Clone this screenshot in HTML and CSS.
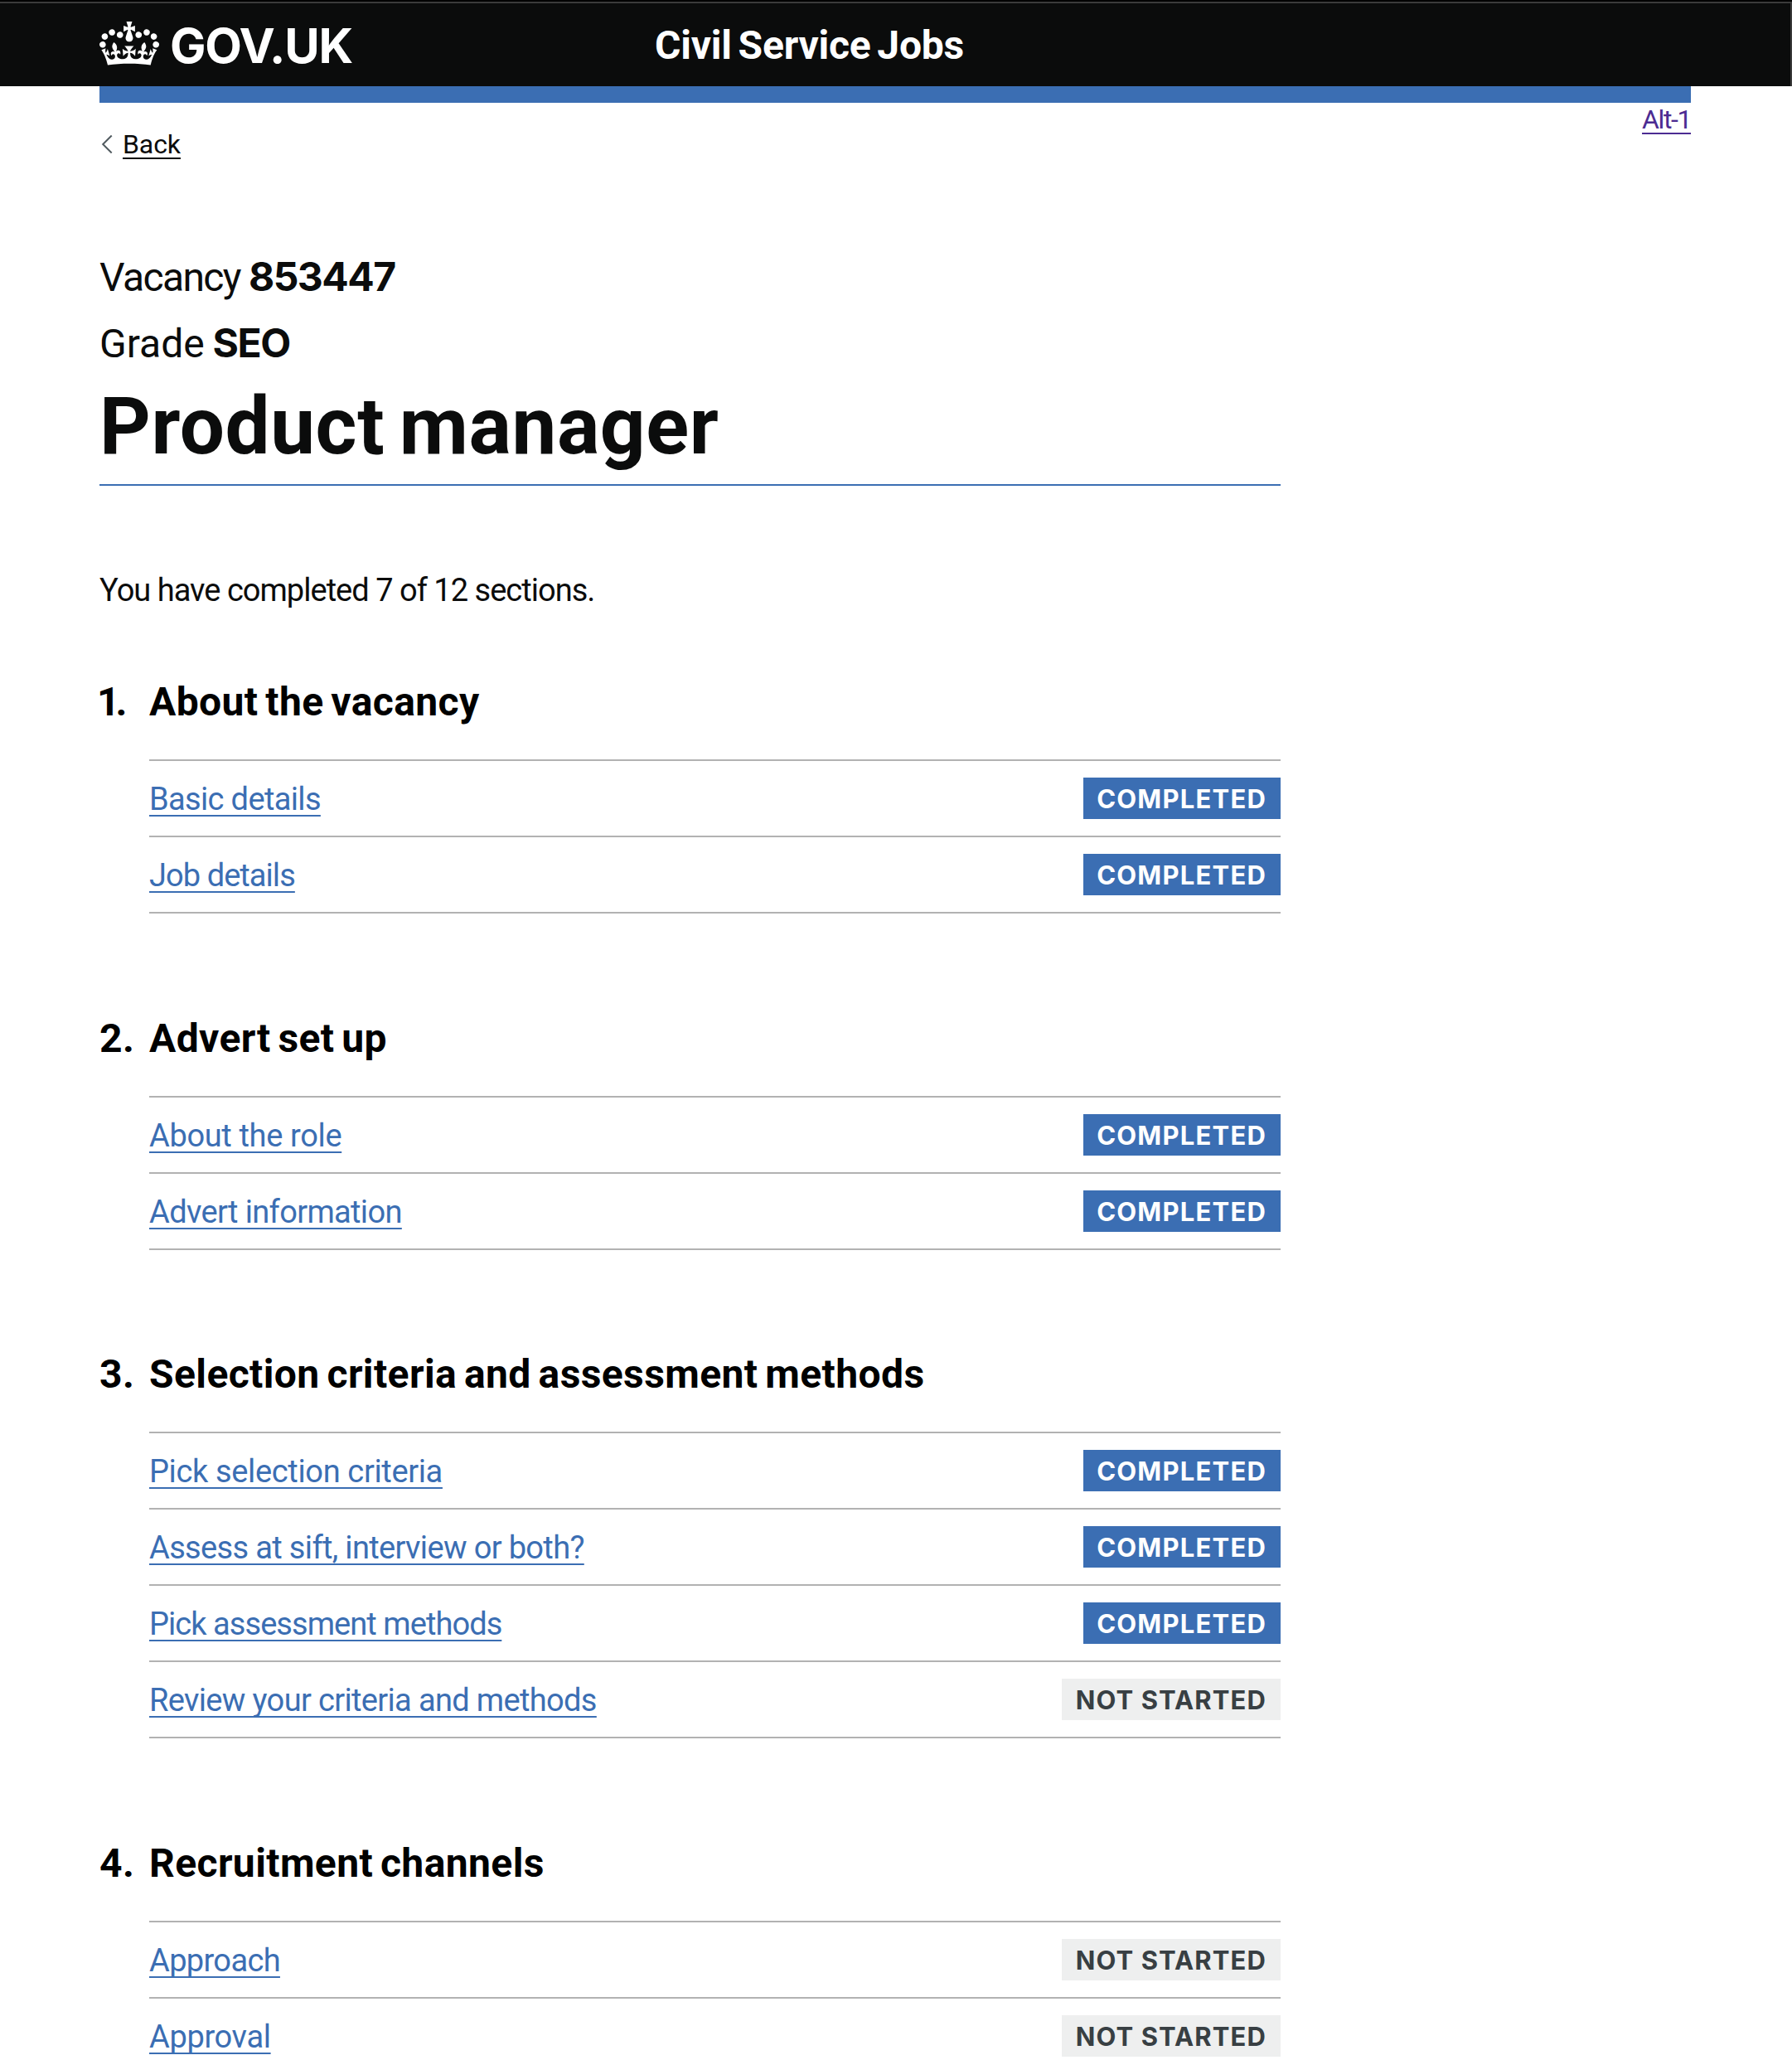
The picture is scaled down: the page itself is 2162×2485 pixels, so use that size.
FILE: index.html
```
<!DOCTYPE html>
<html lang="en">
<head>
<meta charset="utf-8">
<title>Product manager - Civil Service Jobs</title>
<link rel="stylesheet" href="styles.css">
</head>
<body>
<header class="header">
  <div class="header-inner">
    <a class="logo" href="#">
      <svg class="crown" viewBox="0 0 132 97" width="72" height="53" fill="currentColor" aria-hidden="true"><path fill-rule="evenodd" d="M25 30.2c3.5 1.5 7.7-.2 9.1-3.7 1.5-3.6-.2-7.8-3.9-9.2-3.6-1.4-7.6.3-9.1 3.9-1.4 3.5.3 7.5 3.9 9zM9 39.5c3.6 1.5 7.8-.2 9.2-3.7 1.5-3.6-.2-7.8-3.9-9.1-3.6-1.5-7.6.2-9.1 3.8-1.4 3.5.3 7.5 3.8 9zM4.4 57.2c3.5 1.5 7.7-.2 9.1-3.8 1.5-3.6-.2-7.7-3.9-9.1-3.5-1.5-7.6.3-9.1 3.8-1.4 3.5.3 7.6 3.9 9.1zm38.3-21.4c3.5 1.5 7.7-.2 9.1-3.8 1.5-3.6-.2-7.7-3.9-9.1-3.6-1.5-7.6.3-9.1 3.8-1.3 3.6.4 7.7 3.9 9.1zm64.4-5.6c-3.6 1.5-7.8-.2-9.1-3.7-1.5-3.6.2-7.8 3.8-9.2 3.6-1.4 7.7.3 9.2 3.9 1.3 3.5-.4 7.5-3.9 9zm15.9 9.3c-3.6 1.5-7.7-.2-9.1-3.7-1.5-3.6.2-7.8 3.7-9.1 3.6-1.5 7.7.2 9.2 3.8 1.5 3.5-.3 7.5-3.8 9zm4.7 17.7c-3.6 1.5-7.8-.2-9.2-3.8-1.5-3.6.2-7.7 3.9-9.1 3.6-1.5 7.7.3 9.2 3.8 1.3 3.5-.4 7.6-3.9 9.1zM89.3 35.8c-3.6 1.5-7.8-.2-9.2-3.8-1.4-3.6.2-7.7 3.9-9.1 3.6-1.5 7.7.3 9.2 3.8 1.4 3.6-.3 7.7-3.9 9.1zM69.7 17.7l8.9 4.7V9.3l-8.9 2.8c-.2-.3-.5-.6-.9-.9L72.4 0H59.6l3.5 11.2c-.3.3-.6.5-.9.9l-8.8-2.8v13.1l8.8-4.7c.3.3.6.7.9.9l-5 15.4v.1c-.2.8-.4 1.6-.4 2.4 0 4.1 3.1 7.5 7 8.1h.2c.3 0 .7.1 1 .1.4 0 .7 0 1-.1h.2c4-.6 7.1-4.1 7.1-8.1 0-.8-.1-1.7-.4-2.4V34l-5.1-15.4c.4-.2.7-.6 1-.9zM66 92.8c16.9 0 32.8 1.1 47.1 3.2 4-16.9 8.9-26.7 14-33.5l-9.6-3.4c1 4.9 1.1 7.2 0 10.2-1.5-1.4-3-4.3-4.2-8.7L108.6 76c2.8-2 5-3.2 7.5-3.3-4.4 9.4-10 11.9-13.6 11.2-4.3-.8-6.3-4.6-5.6-7.9 1-4.7 5.7-5.9 8-.5 4.3-8.7-3-11.4-7.6-8.8 7.1-7.2 7.9-13.5 2.1-21.1-8 6.1-8.1 12.3-4.5 20.8-4.7-5.4-12.1-2.5-9.5 6.2 3.4-5.2 7.9-2 7.2 3.1-.6 4.3-6.4 7.8-13.5 7.2-10.3-.9-10.9-8-11.2-13.8 2.5-.5 7.1 1.8 11 7.3L80.2 60c-4.1 4.4-8 5.3-12.3 5.4 1.4-4.4 8-11.6 8-11.6H55.5s6.4 7.2 7.9 11.6c-4.2-.1-8-1-12.3-5.4l1.4 16.4c3.9-5.5 8.5-7.7 10.9-7.3-.3 5.8-.9 12.8-11.1 13.8-7.2.6-12.9-2.9-13.5-7.2-.7-5 3.8-8.3 7.1-3.1 2.7-8.7-4.6-11.6-9.4-6.2 3.7-8.5 3.6-14.7-4.6-20.8-5.8 7.6-5 13.9 2.2 21.1-4.7-2.6-11.9.1-7.7 8.8 2.3-5.5 7.1-4.2 8.1.5.7 3.3-1.3 7.1-5.7 7.9-3.5.7-9-1.8-13.5-11.2 2.5.1 4.7 1.3 7.5 3.3l-4.7-15.4c-1.2 4.4-2.7 7.2-4.3 8.7-1.1-3-.9-5.3 0-10.2l-9.5 3.4c5 6.9 9.9 16.7 14 33.5 14.8-2.1 30.8-3.2 47.7-3.2z"/></svg>
      <span class="logo-text">GOV.UK</span>
    </a>
    <a class="service" href="#">Civil Service Jobs</a>
  </div>
</header>
<div class="container">
  <div class="bar"></div>
  <nav class="top-links">
    <a class="back" href="#">
      <svg class="chevron" viewBox="0 0 14 22" width="14" height="22" fill="none" stroke="#505a5f" stroke-width="2" aria-hidden="true"><path d="M12.7.5 2.2 11l10.5 10.5"/></svg>
      <span class="back-text">Back</span>
    </a>
    <a class="alt" href="#">Alt-1</a>
  </nav>
  <main class="main">
    <p class="meta"><span class="meta-vacancy">Vacancy</span> <strong>853447</strong></p>
    <p class="meta"><span>Grade</span> <strong>SEO</strong></p>
    <h1 class="title">Product manager</h1>
    <p class="progress">You have completed 7 of 12 sections.</p>

    <section class="section">
      <h2 class="section-title"><span class="num num-one">1.</span>About the vacancy</h2>
      <ul class="tasks">
        <li class="task"><a class="link" href="#">Basic details</a><strong class="tag">COMPLETED</strong></li>
        <li class="task"><a class="link link-tight" href="#">Job details</a><strong class="tag">COMPLETED</strong></li>
      </ul>
    </section>
    <section class="section section-advert">
      <h2 class="section-title"><span class="num">2.</span>Advert set up</h2>
      <ul class="tasks">
        <li class="task"><a class="link link-loose" href="#">About the role</a><strong class="tag">COMPLETED</strong></li>
        <li class="task"><a class="link" href="#">Advert information</a><strong class="tag">COMPLETED</strong></li>
      </ul>
    </section>
    <section class="section">
      <h2 class="section-title"><span class="num">3.</span>Selection criteria and assessment methods</h2>
      <ul class="tasks">
        <li class="task"><a class="link link-loose" href="#">Pick selection criteria</a><strong class="tag">COMPLETED</strong></li>
        <li class="task"><a class="link" href="#">Assess at sift, interview or both?</a><strong class="tag">COMPLETED</strong></li>
        <li class="task"><a class="link link-tight" href="#">Pick assessment methods</a><strong class="tag">COMPLETED</strong></li>
        <li class="task"><a class="link" href="#">Review your criteria and methods</a><strong class="tag tag-grey">NOT STARTED</strong></li>
      </ul>
    </section>
    <section class="section">
      <h2 class="section-title"><span class="num">4.</span>Recruitment channels</h2>
      <ul class="tasks">
        <li class="task"><a class="link" href="#">Approach</a><strong class="tag tag-grey">NOT STARTED</strong></li>
        <li class="task"><a class="link link-loose" href="#">Approval</a><strong class="tag tag-grey">NOT STARTED</strong></li>
      </ul>
    </section>
  </main>
</div>
</body>
</html>
```
FILE: styles.css
```
* { box-sizing: border-box; }
html { overflow: hidden; }
body {
  margin: 0;
  height: 2485px;
  overflow: hidden;
  background: #fff;
  color: #0b0c0c;
  font-family: Roboto, "Liberation Sans", sans-serif;
}
p, h1, h2, ul { margin: 0; padding: 0; }
a { text-decoration-thickness: 2px; text-decoration-skip-ink: none; }

.header {
  height: 104px;
  border-top: 2px solid #000;
  background: #0b0c0c;
}
.header-inner {
  display: grid;
  grid-template-columns: 670px 1fr;
  height: 102px;
  padding-left: 120px;
  border-top: 2px solid #3b3b3b;
  border-right: 2px solid #3b3b3b;
  line-height: 100px;
}
.logo, .service { color: #fff; text-decoration: none; font-weight: 700; }
.logo { display: flex; align-items: center; gap: 13px; }
.crown { margin-bottom: 5px; }
.logo-text { font-family: Inter, sans-serif; font-size: 58px; letter-spacing: -1.2px; }
.service { padding-top: 1px; font-size: 48px; letter-spacing: -0.2px; word-spacing: -4px; }

.container { padding: 0 122px 0 120px; }
.bar { height: 20px; background: #3b6eb3; }

.top-links {
  display: flex;
  justify-content: space-between;
  align-items: flex-start;
  height: 170px;
  font-size: 32px;
  line-height: 40px;
}
.back {
  display: flex;
  align-items: center;
  gap: 12px;
  margin-top: 30px;
  padding-left: 2px;
  color: #0b0c0c;
  text-decoration: none;
}
.back-text {
  letter-spacing: -0.1px;
  text-decoration: underline 2px;
  text-underline-offset: 5px;
  text-decoration-skip-ink: none;
}
.alt { color: #4c2c92; letter-spacing: -1.4px; text-underline-offset: 5px; }

.main { width: 1425px; }
.meta { padding-top: 1px; font-size: 48px; line-height: 79px; word-spacing: -2px; }
.meta strong { font-family: Inter, sans-serif; line-height: 1; letter-spacing: -1.5px; }
.meta-vacancy { letter-spacing: -1.6px; }
.title {
  margin-top: 10px;
  padding-bottom: 20px;
  border-bottom: 2px solid #3b6eb3;
  font-size: 96px;
  line-height: 100px;
  letter-spacing: 0.6px;
  word-spacing: -7px;
}
.progress {
  margin: 101px 0 79px;
  font-size: 38px;
  line-height: 50px;
  letter-spacing: -0.98px;
}

.section { margin-bottom: 120px; }
.section:last-child { margin-bottom: 0; }
.section-advert { margin-bottom: 119px; }
.section-title {
  display: grid;
  grid-template-columns: 60px 1fr;
  margin-bottom: 39px;
  padding-top: 1px;
  color: #000;
  font-size: 48px;
  line-height: 60px;
  letter-spacing: 0.4px;
  word-spacing: -3.5px;
}
.num-one { margin-left: -3px; letter-spacing: -5px; }
.tasks {
  margin-left: 60px;
  border-top: 2px solid #b2b2b2;
  list-style: none;
}
.task {
  display: flex;
  align-items: center;
  justify-content: space-between;
  height: 92px;
  border-bottom: 2px solid #b2b2b2;
}
.link {
  padding-top: 2px;
  color: #3b6eb3;
  font-size: 38px;
  line-height: 50px;
  letter-spacing: -0.65px;
  text-underline-offset: 6px;
}
.link-tight { letter-spacing: -0.94px; }
.link-loose { letter-spacing: -0.35px; }
.tag {
  height: 50px;
  padding: 1px 17px 0 16px;
  background: #3b6eb3;
  color: #fff;
  font: 700 31px/50px Inter, sans-serif;
  letter-spacing: 1.2px;
}
.tag-grey {
  padding-left: 17px;
  background: #eeefef;
  color: #383f43;
  letter-spacing: 1.1px;
}
```
